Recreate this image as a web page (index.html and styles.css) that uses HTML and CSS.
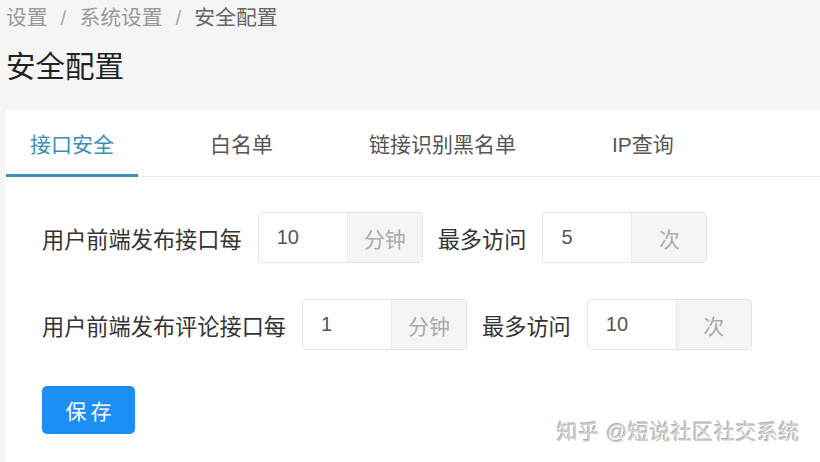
FILE: index.html
```html
<!DOCTYPE html>
<html lang="zh-CN">
<head>
<meta charset="utf-8">
<title>安全配置</title>
<link rel="stylesheet" href="styles.css">
</head>
<body>
<div class="page">
  <header class="page-header">
    <nav class="breadcrumb">
      <span class="crumb">设置</span><span class="sep">/</span><span class="crumb">系统设置</span><span class="sep">/</span><span class="crumb current">安全配置</span>
    </nav>
    <h1 class="title">安全配置</h1>
  </header>
  <main class="card">
    <div class="tabs">
      <div class="tab active">接口安全</div>
      <div class="tab">白名单</div>
      <div class="tab">链接识别黑名单</div>
      <div class="tab">IP查询</div>
    </div>
    <form class="form">
      <div class="row">
        <span class="label">用户前端发布接口每</span>
        <div class="group">
          <input class="input" value="10">
          <span class="addon">分钟</span>
        </div>
        <span class="label">最多访问</span>
        <div class="group">
          <input class="input" value="5">
          <span class="addon">次</span>
        </div>
      </div>
      <div class="row">
        <span class="label">用户前端发布评论接口每</span>
        <div class="group">
          <input class="input" value="1">
          <span class="addon">分钟</span>
        </div>
        <span class="label">最多访问</span>
        <div class="group">
          <input class="input" value="10">
          <span class="addon">次</span>
        </div>
      </div>
      <button type="button" class="btn">保存</button>
    </form>
    <div class="watermark">知乎 @短说社区社交系统</div>
  </main>
</div>
</body>
</html>
```

FILE: styles.css
```css
* { box-sizing: border-box; }
html, body { margin: 0; padding: 0; height: 100%; }
body {
  background: #f5f5f5;
  font-family: "Liberation Sans", "Noto Sans CJK SC", sans-serif;
  color: #333;
  overflow: hidden;
}
.page {
  display: flex;
  flex-direction: column;
  height: 462px;
}
.page-header {
  height: 110px;
  padding: 0 6px;
}
.breadcrumb {
  font-size: 20.8px;
  line-height: 36px;
  color: #999;
}
.breadcrumb .sep { margin: 0 13px; color: #aaa; }
.breadcrumb .current { color: #666; }
.title {
  margin: 11px 0 0;
  font-size: 29.5px;
  line-height: 40px;
  font-weight: normal;
  color: #222;
}
.card {
  position: relative;
  flex: 1;
  margin-left: 6px;
  background: #fff;
}
.tabs {
  display: flex;
  gap: 48px;
  height: 67px;
  border-bottom: 1px solid #e8e8e8;
}
.tab {
  height: 67px;
  padding: 14px 24px 0;
  line-height: 42px;
  font-size: 21px;
  color: #555;
  border-bottom: 3px solid transparent;
}
.tab.active {
  color: #3a8fb8;
  border-bottom-color: #3a8fbd;
}
.form {
  padding: 35px 0 0 36px;
  display: flex;
  flex-direction: column;
  align-items: flex-start;
  gap: 36px;
}
.row {
  display: flex;
  align-items: center;
}
.label {
  font-size: 22.2px;
  color: #333;
  margin-right: 16px;
}
.group {
  display: flex;
  height: 51px;
  border: 1px solid #e3e3e3;
  border-radius: 4px;
  margin-right: 15px;
  overflow: hidden;
}
.input {
  width: 88px;
  height: 100%;
  border: none;
  outline: none;
  padding: 0 0 0 18px;
  font-family: "Liberation Sans", "Noto Sans CJK SC", sans-serif;
  font-size: 20px;
  color: #555;
  background: #fff;
}
.addon {
  width: 75px;
  display: flex;
  align-items: center;
  justify-content: center;
  background: #f5f5f5;
  border-left: 1px solid #e8e8e8;
  font-size: 21px;
  color: #aaa;
}
.btn {
  width: 93px;
  height: 48px;
  border: none;
  border-radius: 5px;
  background: #1c8ff5;
  color: #fff;
  font-family: "Liberation Sans", "Noto Sans CJK SC", sans-serif;
  font-size: 21px;
  letter-spacing: 4px;
  padding: 0 0 0 4px;
}
.watermark {
  position: absolute;
  right: 20px;
  bottom: 17px;
  font-size: 21px;
  color: #cdcdcd;
  text-shadow: 1px 1px 0 #fff, -1px -1px 0 #b0b0b0;
  letter-spacing: 0.5px;
}
```
